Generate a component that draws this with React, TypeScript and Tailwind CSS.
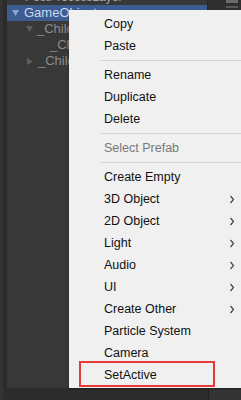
import React from "react";

type Item = { label: string; sub?: boolean; disabled?: boolean } | { sep: true };

const items: Item[] = [
  { label: "Copy" },
  { label: "Paste" },
  { sep: true },
  { label: "Rename" },
  { label: "Duplicate" },
  { label: "Delete" },
  { sep: true },
  { label: "Select Prefab", disabled: true },
  { sep: true },
  { label: "Create Empty" },
  { label: "3D Object", sub: true },
  { label: "2D Object", sub: true },
  { label: "Light", sub: true },
  { label: "Audio", sub: true },
  { label: "UI", sub: true },
  { label: "Create Other", sub: true },
  { label: "Particle System" },
  { label: "Camera" },
  { label: "SetActive" },
];

function Chevron() {
  return (
    <svg width="6" height="9" viewBox="0 0 6 9" className="mr-[14px]">
      <polyline points="1.5,1 4.5,4.5 1.5,8" fill="none" stroke="#444" strokeWidth="1.2" />
    </svg>
  );
}

function Tri({ down }: { down?: boolean }) {
  return down ? (
    <svg width="7" height="6" viewBox="0 0 7 6">
      <polygon points="0,0 7,0 3.5,6" fill="currentColor" />
    </svg>
  ) : (
    <svg width="6" height="7" viewBox="0 0 6 7">
      <polygon points="0,0 6,3.5 0,7" fill="currentColor" />
    </svg>
  );
}

export default function App() {
  return (
    <div
      className="relative w-[241px] h-[400px] overflow-hidden bg-[#383838] flex flex-col"
      style={{ fontFamily: '"Liberation Sans", Arial, sans-serif' }}
    >
      <div className="flex flex-1">
        <div className="w-[3px] bg-[#333333]" />
        <div className="w-[4px] bg-[#2a2a2a]" />
        <div className="flex-1 flex flex-col text-[12px] text-[#8c8c8c] mt-[-11px]">
          <div className="h-[16px] flex items-center pl-[18px] text-[#a8a8a8]">PostProcessLayer</div>
          <div className="h-[16px] flex items-center bg-[#3d5d92] text-[#c9d8f0] pl-[5px] gap-[5px]">
            <span className="text-[#8fa6cc]"><Tri down /></span>
            <span className="text-[13px]">GameObject</span>
          </div>
          <div className="h-[16px] flex items-center pl-[19px] gap-[4px]">
            <span className="text-[#5e5e5e]"><Tri down /></span>
            <span className="text-[13px]">_Child</span>
          </div>
          <div className="h-[16px] flex items-center pl-[43px]">
            <span className="text-[13px]">_Child</span>
          </div>
          <div className="h-[16px] flex items-center pl-[20px] gap-[5px]">
            <span className="text-[#5e5e5e]"><Tri /></span>
            <span className="text-[13px]">_Child</span>
          </div>
        </div>
        <div className="w-[34px] bg-[#2f2f2f] border-l border-[#262626] flex flex-col items-end pr-[3px]">
          <div className="w-[12px] h-[3px] bg-[#6a6a6a]" />
          <div className="w-[12px] h-[2px] bg-[#5a5a5a] mt-[3px]" />
        </div>
      </div>
      <div className="h-[12px] flex bg-[#2c2c2c]">
        <div className="w-[3px] bg-[#333333]" />
        <div className="w-[206px] border-r border-[#202020]" />
        <div className="flex-1 bg-[#333333]" />
      </div>

      <div className="absolute left-[69px] top-[10px] w-[180px] bg-[#f0f0f0] pt-[3px] pb-[2px] text-[12.5px] text-[#111] shadow-[0_1px_2px_rgba(0,0,0,0.4)]">
        {items.map((it, i) =>
          "sep" in it ? (
            <div key={i} className="h-[7px] flex items-center pl-[31px]">
              <div className="flex-1 h-px bg-[#d4d4d4]" />
            </div>
          ) : (
            <div key={i} className="h-[22px] flex items-center pl-[35px]">
              <span className={"flex-1 " + (it.disabled ? "text-[#7a7a7a]" : "")}>{it.label}</span>
              {it.sub && <Chevron />}
            </div>
          )
        )}
      </div>

      <div className="absolute left-[79px] top-[361px] w-[136px] h-[26px] border-2 border-[#e53a3a]" />
    </div>
  );
}
